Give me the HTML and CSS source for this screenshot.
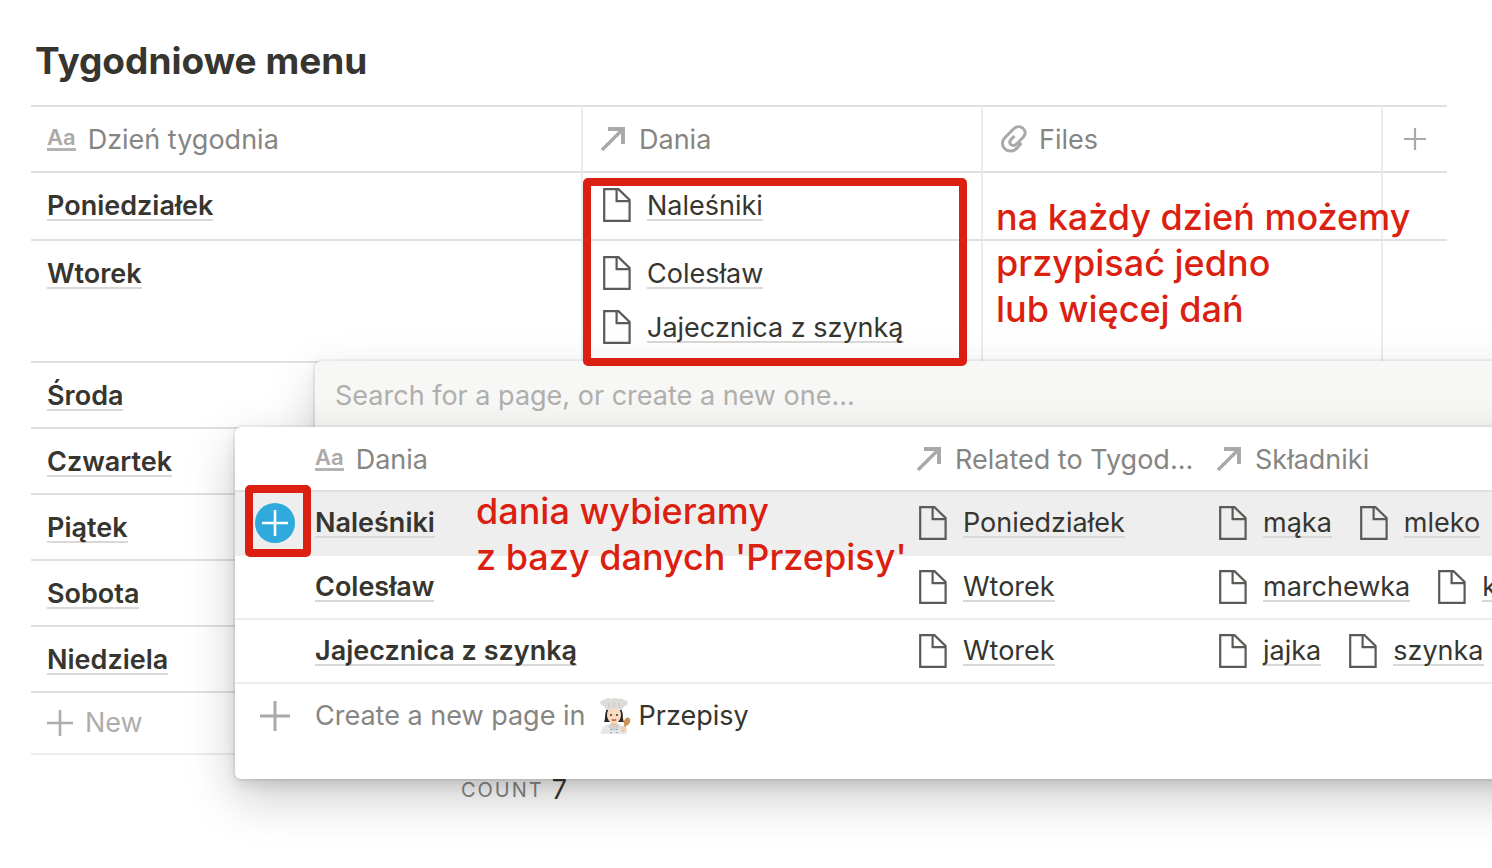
FILE: index.html
```html
<!DOCTYPE html>
<html lang="pl">
<head>
<meta charset="utf-8">
<meta name="viewport" content="width=device-width, initial-scale=1">
<title>Tygodniowe menu</title>
<link rel="stylesheet" href="styles.css">
</head>
<body>
<svg class="sprite" aria-hidden="true">
  <symbol id="doc" viewBox="0 0 28 34">
    <path d="M1.2 1.2h14.3L26.6 12v20.8H1.2z M13.6 1.2v12h13" fill="none" stroke="currentColor" stroke-width="2.2"/>
  </symbol>
  <symbol id="arrow" viewBox="0 0 24 24">
    <path d="M1 23 20 4" fill="none" stroke="currentColor" stroke-width="3.4"/>
    <path d="M7 0h17v17h-4V4H7z" fill="currentColor"/>
  </symbol>
  <symbol id="clip" viewBox="0 0 26 28">
    <path d="M20.500 18 16.500 22.500C13 27 7 27 3.800 23.800S.8 15.800 4 12.500L12.500 4C15.500 1 19.500 1 22.200 3.500s2.600 6.200-.2 9L15.500 19c-1.900 1.900-4.300 1.900-5.700.5s-1.200-3.600.5-5.400L13.500 11" fill="none" stroke="currentColor" stroke-width="3"/>
  </symbol>
  <symbol id="plus" viewBox="0 0 28 28">
    <path d="M14 0v28M0 14h28" fill="none" stroke="currentColor" stroke-width="2.800"/>
  </symbol>
  <symbol id="cook" viewBox="0 0 32 36">
    <path d="M8 11c-3 5-1 9-3 13h6l-1-11zM22 11c3 5 1 9 3 13h-6l1-11z" fill="#2f2725"/>
    <path d="M2 36c0-7 4-9 9-10h8c5 1 9 3 9 10z" fill="#e4e8ea"/>
    <path d="M12 22h6v5l-3 3-3-3z" fill="#e8c4a5"/>
    <path d="M11 26l4 4 4-4 2 3-6 4-6-4z" fill="#cbd1d5"/>
    <ellipse cx="15" cy="17" rx="7" ry="8.500" fill="#f8dcc2"/>
    <path d="M7 12 5 8C0 7 0 2 5 2c2-2.500 6-2 7-1 2-1.300 5-1.300 7 0 2-1 5-.5 6 1 5 0 5 5 .5 6L23 12c-5-1.500-11-1.500-16 0z" fill="#dddcd8"/>
    <path d="M10 5v5M15 4v5M20 5v5" stroke="#c9c8c5"/>
    <circle cx="12" cy="17" r="1" fill="#46322b"/><circle cx="18" cy="17" r="1" fill="#46322b"/>
    <path d="M12.800 21.500q2.200 1.500 4.400 0" fill="none" stroke="#b8473d" stroke-width="1.300"/>
    <path d="M12 31v1M12 34v1M18 31v1M18 34v1" stroke="#8c9499" stroke-width="1.500"/>
    <path d="m24 34 3-9" stroke="#c98c53" stroke-width="2"/>
    <ellipse cx="28" cy="23.500" rx="3" ry="4" fill="#cf935a" transform="rotate(25 28 23.500)"/>
    <circle cx="24.500" cy="31" r="3" fill="#f1cdae"/>
  </symbol>
</svg>

<main class="page">
  <h1 class="heading">Tygodniowe menu</h1>

  <table class="menu">
    <colgroup><col><col class="col-prop"><col class="col-prop"><col class="col-add"></colgroup>
    <thead>
      <tr>
        <th scope="col"><span class="prop"><span class="aa" aria-hidden="true">Aa</span>Dzień tygodnia</span></th>
        <th scope="col"><span class="prop"><svg class="arrow"><use href="#arrow"/></svg>Dania</span></th>
        <th scope="col"><span class="prop"><svg class="clip"><use href="#clip"/></svg>Files</span></th>
        <th scope="col"><button class="add" type="button" aria-label="Add a property"><svg class="plus-s"><use href="#plus"/></svg></button></th>
      </tr>
    </thead>
    <tbody>
      <tr>
        <td><div class="item"><a class="link strong" href="#poniedzialek">Poniedziałek</a></div></td>
        <td><div class="relations"><div class="item"><svg class="doc"><use href="#doc"/></svg><a class="link" href="#nalesniki">Naleśniki</a></div></div></td>
        <td></td><td></td>
      </tr>
      <tr>
        <td><div class="item"><a class="link strong" href="#wtorek">Wtorek</a></div></td>
        <td><div class="relations">
          <div class="item"><svg class="doc"><use href="#doc"/></svg><a class="link" href="#coleslaw">Colesław</a></div>
          <div class="item"><svg class="doc"><use href="#doc"/></svg><a class="link" href="#jajecznica">Jajecznica z szynką</a></div>
        </div></td>
        <td></td><td></td>
      </tr>
      <tr><td><div class="item"><a class="link strong" href="#sroda">Środa</a></div></td><td></td><td></td><td></td></tr>
      <tr><td><div class="item"><a class="link strong" href="#czwartek">Czwartek</a></div></td><td></td><td></td><td></td></tr>
      <tr><td><div class="item"><a class="link strong" href="#piatek">Piątek</a></div></td><td></td><td></td><td></td></tr>
      <tr><td><div class="item"><a class="link strong" href="#sobota">Sobota</a></div></td><td></td><td></td><td></td></tr>
      <tr><td><div class="item"><a class="link strong" href="#niedziela">Niedziela</a></div></td><td></td><td></td><td></td></tr>
    </tbody>
    <tfoot>
      <tr class="new-row"><td colspan="4"><button class="new" type="button"><svg class="plus-m"><use href="#plus"/></svg>New</button></td></tr>
      <tr class="count-row"><td><div class="total"><span class="count-label">COUNT</span><span class="count">7</span></div></td><td colspan="3"></td></tr>
    </tfoot>
  </table>

  <div class="search">
    <input class="search-input" type="text" aria-label="Search for a page" placeholder="Search for a page, or create a new one...">
  </div>

  <section class="picker">
    <table class="results">
      <colgroup><col class="col-pick"><col class="col-dish"><col class="col-related"><col></colgroup>
      <thead>
        <tr>
          <th></th>
          <th scope="col"><span class="prop"><span class="aa" aria-hidden="true">Aa</span>Dania</span></th>
          <th scope="col"><span class="prop"><svg class="arrow"><use href="#arrow"/></svg>Related to Tygod...</span></th>
          <th scope="col"><span class="prop"><svg class="arrow"><use href="#arrow"/></svg>Składniki</span></th>
        </tr>
      </thead>
      <tbody>
        <tr class="active">
          <td><button class="pick" type="button" aria-label="Add Naleśniki"><svg class="plus-m"><use href="#plus"/></svg></button></td>
          <td><div class="item"><a class="link strong" href="#nalesniki">Naleśniki</a></div></td>
          <td><div class="item"><svg class="doc"><use href="#doc"/></svg><a class="link" href="#poniedzialek">Poniedziałek</a></div></td>
          <td><div class="list"><div class="item"><svg class="doc"><use href="#doc"/></svg><a class="link" href="#maka">mąka</a></div><div class="item"><svg class="doc"><use href="#doc"/></svg><a class="link" href="#mleko">mleko</a></div></div></td>
        </tr>
        <tr>
          <td></td>
          <td><div class="item"><a class="link strong" href="#coleslaw">Colesław</a></div></td>
          <td><div class="item"><svg class="doc"><use href="#doc"/></svg><a class="link" href="#wtorek">Wtorek</a></div></td>
          <td><div class="list"><div class="item"><svg class="doc"><use href="#doc"/></svg><a class="link" href="#marchewka">marchewka</a></div><div class="item"><svg class="doc"><use href="#doc"/></svg><a class="link" href="#k">k</a></div></div></td>
        </tr>
        <tr>
          <td></td>
          <td><div class="item"><a class="link strong" href="#jajecznica">Jajecznica z szynką</a></div></td>
          <td><div class="item"><svg class="doc"><use href="#doc"/></svg><a class="link" href="#wtorek">Wtorek</a></div></td>
          <td><div class="list"><div class="item"><svg class="doc"><use href="#doc"/></svg><a class="link" href="#jajka">jajka</a></div><div class="item"><svg class="doc"><use href="#doc"/></svg><a class="link" href="#szynka">szynka</a></div></div></td>
        </tr>
      </tbody>
    </table>
    <button class="create" type="button">
      <svg class="plus-l"><use href="#plus"/></svg>
      <span class="create-text">Create a new page in</span>
      <svg class="cook"><use href="#cook"/></svg>
      <span class="create-name">Przepisy</span>
    </button>
  </section>

  <div class="frame frame-dishes"></div>
  <div class="frame frame-pick"></div>
  <p class="note note-days">na każdy dzień możemy<br>przypisać jedno<br>lub więcej dań</p>
  <p class="note note-source">dania wybieramy<br>z bazy danych 'Przepisy'</p>
</main>
</body>
</html>
```

FILE: styles.css
```css
* { box-sizing: border-box; }

body {
  margin: 0;
  background: #fff;
  color: #37352f;
  font-family: Inter, "Noto Sans", sans-serif;
  font-size: 27px;
  line-height: 40px;
}

button {
  padding: 0;
  border: 0;
  background: none;
  color: inherit;
  font: inherit;
  cursor: pointer;
}

svg { display: block; flex: none; }
.sprite { position: absolute; width: 0; height: 0; }

.page {
  position: relative;
  min-height: 100vh;
  padding: 36px 45px 0 31px;
  overflow: hidden;
}

.heading {
  margin: 0 0 19px;
  padding-left: 4px;
  font-size: 37px;
  font-weight: 700;
  line-height: 50px;
}

/* Tables */
table {
  width: 100%;
  border-spacing: 0;
  table-layout: fixed;
}
th, td { padding: 0; text-align: left; vertical-align: top; }
th { color: #868582; font-weight: 400; }

.col-prop { width: 400px; }
.col-add { width: 64px; }

.menu th { border-top: 2px solid #e0e0df; padding: 13px 16px 11px; }
.menu th, .menu tbody td { border-bottom: 2px solid #e0e0df; border-right: 2px solid #ececeb; }
.menu th:last-child, .menu tbody td:last-child { border-right: 0; }
.menu tbody td { padding: 12px 16px; }
.menu th + th { padding-left: 18px; }
.menu tbody td + td { padding-left: 20px; }

.prop { display: flex; align-items: center; gap: 12px; white-space: nowrap; }
.prop svg { color: #aaa9a7; }
.aa {
  margin-bottom: 4px;
  border-bottom: 3px solid #b4b3b1;
  color: #aaa9a7;
  font-size: 22px;
  font-weight: 600;
  line-height: 22px;
}
.arrow { width: 24px; height: 24px; margin: 0 2px 2px 0; }
.clip { width: 26px; height: 28px; margin-bottom: 2px; }
.doc { width: 28px; height: 34px; color: #5b5a57; }
.plus-s { width: 22px; height: 22px; }
.plus-m { width: 26px; height: 26px; }
.plus-l { width: 30px; height: 30px; }
.add { display: flex; align-items: center; height: 40px; color: #aaa9a7; }
.menu th:last-child { padding: 12px 0 12px 21px; }

.item { display: flex; align-items: center; gap: 16px; height: 40px; }
.relations { display: grid; gap: 14px; padding-bottom: 2px; }
.relations .item, .results .item { color: #37352f; }
.link {
  padding-top: 4px;
  border-bottom: 2px solid #d9d8d6;
  color: inherit;
  line-height: 26px;
  text-decoration: none;
  white-space: nowrap;
}
.strong { font-weight: 600; }

.new-row td { padding: 10px 16px; border-bottom: 2px solid #ececeb; }
.new { display: flex; align-items: center; gap: 12px; color: #aeadab; }
.count-row td { padding: 15px 16px 13px 0; }
.total { display: flex; align-items: center; justify-content: flex-end; gap: 8px; }
.count-label { color: #868582; font-size: 20px; letter-spacing: 2px; }

/* Page search and results */
.search {
  position: absolute;
  top: 361px;
  left: 315px;
  right: -60px;
  height: 80px;
  padding: 15px 20px;
  border-radius: 6px;
  background: #f7f7f5;
  box-shadow: 0 0 0 2px rgba(15, 15, 15, .05), 0 6px 12px rgba(15, 15, 15, .08), 0 18px 48px rgba(15, 15, 15, .18);
}
.search-input {
  width: 100%;
  height: 40px;
  padding: 0;
  border: 0;
  outline: 0;
  background: none;
  color: inherit;
  font: inherit;
}
.search-input::placeholder { color: #b0afad; opacity: 1; }

.picker {
  position: absolute;
  top: 427px;
  left: 235px;
  right: -60px;
  padding-bottom: 31px;
  border-radius: 6px;
  background: #fff;
  box-shadow: 0 0 0 2px rgba(15, 15, 15, .05), 0 6px 12px rgba(15, 15, 15, .1), 0 18px 48px rgba(15, 15, 15, .22);
}
.col-pick { width: 80px; }
.col-dish { width: 602px; }
.col-related { width: 300px; }
.results th { padding: 13px 0 10px; border-bottom: 2px solid #e0e0df; }
.results td { padding: 11px 0; border-bottom: 2px solid #ececeb; }
.results td:nth-child(n+3) .item { padding-left: 2px; }
.results .link { padding-top: 2px; }
.results .active td { background: #eee; }
.list { display: flex; gap: 26px; }

.pick {
  display: grid;
  place-items: center;
  width: 40px;
  height: 40px;
  margin-left: 20px;
  border-radius: 50%;
  background: #2eaadc;
  color: #fff;
}
.create {
  display: flex;
  align-items: center;
  width: 100%;
  height: 64px;
  padding-left: 25px;
  color: #868582;
}
.create .plus-l { color: #aaa9a7; }
.create-text { margin-left: 25px; }
.cook { width: 32px; height: 36px; margin: 0 8px 0 13px; }
.create-name { color: #37352f; }

/* Annotations */
.frame { position: absolute; border: 8px solid #db1f11; border-radius: 5px; pointer-events: none; }
.frame-dishes { top: 178px; left: 583px; width: 384px; height: 188px; }
.frame-pick { top: 485px; left: 245px; width: 66px; height: 72px; }
.note {
  position: absolute;
  margin: 0;
  color: #db1f11;
  font-size: 36px;
  font-weight: 500;
  line-height: 46px;
  white-space: nowrap;
}
.note-days { top: 194px; left: 996px; }
.note-source { top: 488px; left: 476px; }
```
